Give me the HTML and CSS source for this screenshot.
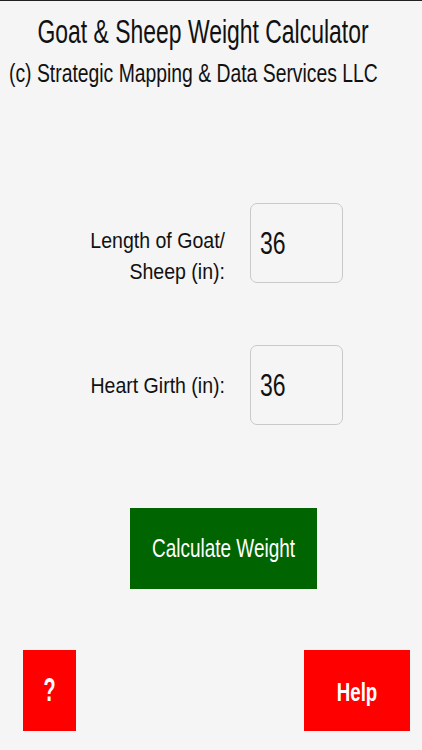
FILE: index.html
```html
<!DOCTYPE html>
<html lang="en">
<head>
<meta charset="utf-8">
<title>Goat &amp; Sheep Weight Calculator</title>
<link rel="stylesheet" href="styles.css">
</head>
<body>
<div class="screen">
  <header class="header">
    <h1 class="title"><span class="cond">Goat &amp; Sheep Weight Calculator</span></h1>
    <p class="subtitle"><span class="cond">(c) Strategic Mapping &amp; Data Services LLC</span></p>
  </header>
  <main class="form">
    <div class="row">
      <label class="label label-two"><span class="cond line">Length of Goat/</span><span class="cond line">Sheep (in):</span></label>
      <div class="field" role="textbox"><span class="cond">36</span></div>
    </div>
    <div class="row">
      <label class="label"><span class="cond">Heart Girth (in):</span></label>
      <div class="field" role="textbox"><span class="cond">36</span></div>
    </div>
    <button class="calc" type="button"><span class="cond">Calculate Weight</span></button>
  </main>
  <footer class="footer">
    <button class="red small" type="button"><span class="cond q">?</span></button>
    <button class="red wide" type="button"><span class="cond help">Help</span></button>
  </footer>
</div>
</body>
</html>
```
FILE: styles.css
```css
html, body {
  margin: 0;
  padding: 0;
}
body {
  background: #f5f5f5;
  font-family: "Liberation Sans", Arial, sans-serif;
  color: #111;
}
.screen {
  border-top: 1px solid #222;
  height: 749px;
  display: flex;
  flex-direction: column;
}
/* condensed look: smaller font stretched vertically */
.cond {
  display: inline-block;
  white-space: nowrap;
  transform-origin: center center;
}
.line {
  display: block;
}
.header {
  padding-top: 10px;
  text-align: center;
}
.title {
  margin: 0;
  padding-right: 16px;
  font-weight: normal;
  font-size: 22.95px;
  line-height: 40px;
  white-space: nowrap;
}
.title .cond { transform: scaleY(1.4815); }
.subtitle {
  margin: 6px 0 0;
  font-size: 19.35px;
  line-height: 30px;
  text-align: left;
  padding-left: 9px;
  white-space: nowrap;
}
.subtitle .cond { transform: scaleY(1.37); }
.form {
  margin-top: 116px;
  display: flex;
  flex-direction: column;
  align-items: flex-start;
}
.row {
  display: grid;
  grid-template-columns: 225px 93px;
  grid-template-rows: 80px;
  column-gap: 25px;
  align-items: center;
  margin-bottom: 62px;
}
.label {
  font-size: 19.55px;
  line-height: 31px;
  text-align: right;
}
.label .cond { transform: scaleY(1.176); }
.label-two {
  align-self: start;
  margin-top: 22px;
}
.field {
  box-sizing: border-box;
  width: 93px;
  height: 80px;
  border: 1px solid #c9c9c9;
  border-radius: 7px;
  background: #f5f5f5;
  padding: 0 0 0 9px;
  display: flex;
  align-items: center;
  font-size: 23.04px;
  color: #111;
}
.field .cond { transform: scaleY(1.389); }
.calc {
  margin: 21px 0 0 130px;
  width: 187px;
  height: 81px;
  border: none;
  background: #006400;
  color: #fff;
  font-family: inherit;
  font-size: 18.98px;
  padding: 0;
}
.calc .cond { transform: scaleY(1.37); }
.footer {
  margin-top: 61px;
  display: flex;
  justify-content: space-between;
  padding: 0 12px 0 23px;
}
.red {
  height: 81px;
  border: none;
  background: #ff0000;
  color: #fff;
  font-family: inherit;
  font-weight: bold;
  padding: 0;
}
.q {
  font-size: 19.8px;
  transform: scaleY(1.667);
}
.help {
  font-size: 18.72px;
  transform: translateY(2px) scaleY(1.389);
}
.small {
  width: 53px;
}
.wide {
  width: 106px;
}
```
